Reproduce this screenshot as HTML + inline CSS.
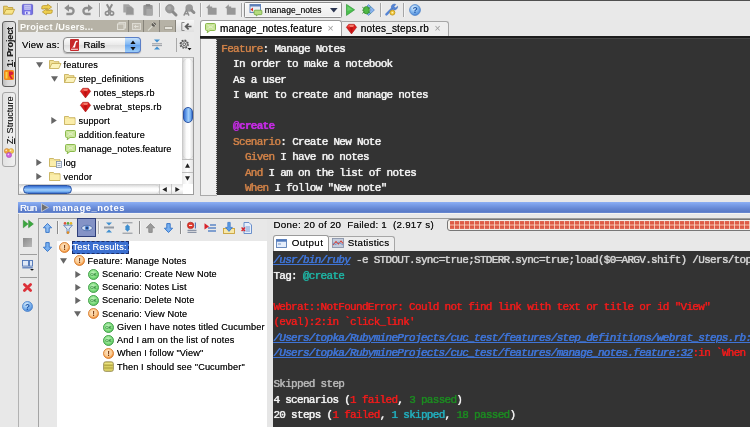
<!DOCTYPE html>
<html><head><meta charset="utf-8"><title>RubyMine - manage_notes</title>
<style>
*{box-sizing:border-box;margin:0;padding:0}
html,body{width:750px;height:427px;overflow:hidden;background:#e8e8e8}
body{position:relative;font-family:"Liberation Sans",sans-serif;font-size:10px;color:#111}
.a{position:absolute}
.t{position:absolute;white-space:nowrap;line-height:14px;height:14px;font-size:10px;letter-spacing:-0.25px;color:#111;text-shadow:0 0 0.6px rgba(0,0,0,.75)}
.m{font-family:"Liberation Mono",monospace;font-size:11px;letter-spacing:-0.7px;white-space:pre;position:absolute;line-height:15.5px;height:15.5px;color:#f2f2f2;-webkit-text-stroke:0.2px currentColor;text-shadow:0 0 0.8px currentColor}
svg{position:absolute;overflow:visible}
#app{position:absolute;left:0;top:0;width:750px;height:427px;overflow:hidden;will-change:transform}
.k{color:#cf8148}.tg{color:#c22ce0;font-weight:bold}
.lk{color:#3f74d6;text-decoration:underline;font-style:italic}
.er{color:#ee1c1c}.cy{color:#1fb3a3}.gn{color:#1d8a22}.gy{color:#b6b6b6}.g1{color:#d2d2d2}.sk{color:#22aebd}
.vt{text-shadow:0 0 0.6px rgba(0,0,0,.6);position:absolute;white-space:nowrap;transform-origin:0 0;transform:rotate(-90deg);font-size:10px;line-height:12px;height:12px}
</style></head><body>
<div id="app">
<svg width="0" height="0" style="left:0;top:0"><defs><radialGradient id="gHelp" cx="0.4" cy="0.3" r="0.75"><stop offset="0" stop-color="#e2f1fd"/><stop offset="0.45" stop-color="#8fc0f2"/><stop offset="1" stop-color="#3f7fd4"/></radialGradient><radialGradient id="gOk" cx="0.45" cy="0.4" r="0.7"><stop offset="0" stop-color="#c9f5c4"/><stop offset="0.6" stop-color="#7ddc7c"/><stop offset="1" stop-color="#3fae4a"/></radialGradient><radialGradient id="gWarn" cx="0.45" cy="0.4" r="0.7"><stop offset="0" stop-color="#fde6c8"/><stop offset="0.55" stop-color="#fbc98e"/><stop offset="0.75" stop-color="#f39a45"/><stop offset="1" stop-color="#e8792a"/></radialGradient></defs></svg>
<div class="a" id="topline" style="left:-10px;top:-10px;width:780px;height:11.2px;background:#505050"></div>
<div class="a" id="toolbar" style="left:-10px;top:1px;width:780px;height:19px;background:#e9e9e9"></div>
<div class="a" id="stripe" style="left:-10px;top:20px;width:28px;height:427px;background:#e8e8e8"></div>
<div class="a" id="btnProject" style="left:2px;top:21px;width:14px;height:66px;border:1px solid #5f5f5f;border-radius:3px;background:linear-gradient(90deg,#bdbdbd,#d9d9d9 40%,#e4e4e4)"></div>
<div class="vt" style="left:3.5px;top:66.6px;font-weight:bold;font-size:9px;letter-spacing:-0.1px;color:#222"><u>1</u>: Project</div>
<svg style="left:4px;top:70px" width="10" height="10" viewBox="0 0 10 10"><rect x="0" y="0" width="10" height="10" rx="1.5" fill="#f28a1c"/><path d="M5 1.5h2.6a1.8 1.8 0 0 1 0 3.6H6.5L9 9H7L5 5.5z" fill="#d81c3a"/><path d="M1.5 2h2v6.5h-2z" fill="#fbd24a"/></svg>
<div class="a" id="btnStructure" style="left:2px;top:92px;width:14px;height:75px;border:1px solid #a6a6a6;border-radius:3px;background:linear-gradient(90deg,#e2e2e2,#f1f1f1)"></div>
<div class="vt" style="left:3.5px;top:144.2px;font-size:9.1px;letter-spacing:0;color:#222"><u>Z</u>: Structure</div>
<svg style="left:4px;top:148px" width="10" height="10" viewBox="0 0 10 10"><circle cx="2.8" cy="3" r="2.5" fill="#f0a43c" stroke="#c87f22" stroke-width="0.5"/><circle cx="7.2" cy="3" r="2.5" fill="#f4c452" stroke="#c89a2a" stroke-width="0.5"/><circle cx="5" cy="7" r="2.6" fill="#cf62dc" stroke="#a040b0" stroke-width="0.5"/><circle cx="2.2" cy="2.4" r="0.8" fill="#fff" opacity=".7"/><circle cx="6.6" cy="2.4" r="0.8" fill="#fff" opacity=".7"/><circle cx="4.4" cy="6.4" r="0.8" fill="#fff" opacity=".7"/></svg>
<div class="a" id="projhead" style="left:18px;top:20px;width:158px;height:12px;background:#b6b2a6"></div>
<div class="t" style="left:20px;top:20px;font-size:9.2px;letter-spacing:0.22px;color:#fbfbf8;font-weight:bold;text-shadow:none">Project /Users...</div>
<div class="a" style="left:128.2px;top:20px;width:1px;height:12px;background:#86837a"></div>
<div class="a" style="left:143.0px;top:20px;width:1px;height:12px;background:#86837a"></div>
<div class="a" style="left:158.7px;top:20px;width:1px;height:12px;background:#86837a"></div>
<div class="a" style="left:174.9px;top:20px;width:1px;height:12px;background:#86837a"></div>
<svg style="left:117px;top:22px" width="9" height="8" viewBox="0 0 9 8"><rect x="2" y="0.5" width="6.5" height="5.5" fill="#c4c1b6" stroke="#dcdad2" stroke-width="1"/><rect x="0.5" y="2" width="6.5" height="5.5" fill="#bdb9ad" stroke="#e0ded6" stroke-width="1"/></svg>
<svg style="left:131.5px;top:22.5px" width="9" height="7" viewBox="0 0 9 7"><rect x="0.5" y="0.5" width="8" height="6" fill="#c4c0b5" stroke="#dcdad2" stroke-width="1"/><path d="M2.5 3.5h4M3.8 2.2L2.5 3.5l1.3 1.3" stroke="#e6e4dc" stroke-width="0.9" fill="none"/></svg>
<svg style="left:147px;top:21px" width="10" height="10" viewBox="0 0 10 10"><path d="M1 9.5L5.5 5" stroke="#dcdad2" stroke-width="1.1"/><circle cx="6.8" cy="3.6" r="2.1" fill="#5c5a55"/><path d="M5.2 1.4L9 5.2" stroke="#dcdad2" stroke-width="0.9"/></svg>
<div class="a" id="minbtn" style="left:164px;top:26px;width:9px;height:3.5px;background:#e4e2da;border:1px solid #a6a296"></div>
<div class="a" id="hidebtn" style="left:176px;top:20px;width:18px;height:12px;background:linear-gradient(#f6f6f6,#e0e0e0)"></div>
<svg style="left:180.5px;top:21.5px" width="11" height="9" viewBox="0 0 11 9"><path d="M3.5 0.5H0.8v8h2.7" stroke="#8a8a8a" stroke-width="1" fill="none"/><path d="M10.5 4.5H5.2M7.6 1.6L4.6 4.5l3 2.9" stroke="#5a5a5a" stroke-width="1.7" fill="none"/></svg>
<div class="a" id="viewrow" style="left:18px;top:32px;width:176px;height:25px;background:#e9e9e9"></div>
<div class="t" style="left:22px;top:38px;font-size:9.6px;letter-spacing:0.2px;">View as:</div>
<div class="a" id="combo" style="left:63px;top:37px;width:78px;height:15.5px;border:1px solid #8b8b8b;border-radius:4px;background:linear-gradient(#fdfdfd,#e9e9e9 50%,#dedede 52%,#f4f4f4);box-shadow:0 1px 1px rgba(0,0,0,.25)"></div>
<div class="a" id="combostep" style="left:125px;top:37px;width:16px;height:15.5px;border:1px solid #5a7fc8;border-left:none;border-radius:0 4px 4px 0;background:linear-gradient(#c6e2fc,#82b8f3 45%,#66a4ee 52%,#9ccefa)"></div>
<svg style="left:130px;top:39.5px" width="6" height="11" viewBox="0 0 6 11"><path d="M3 0.5L5.6 4H0.4z M3 10.5L5.6 7H0.4z" fill="#111"/></svg>
<svg style="left:70px;top:38.5px" width="9" height="12" viewBox="0 0 9 12"><rect x="0" y="0" width="9" height="12" rx="1" fill="#c6282b"/><path d="M2 8.5c1.5-0.5 2-3 3-5.5 0.6-1.2 1.8-1.4 2.6-1v1.2c-1-0.4-1.4 0.2-1.8 1.6L5 8.5z" fill="#fff"/><rect x="1" y="9.7" width="7" height="1.2" fill="#f6c9c9"/></svg>
<div class="t" style="left:83.5px;top:38px;font-size:9.6px;letter-spacing:0.05px;">Rails</div>
<svg style="left:152px;top:39px" width="10" height="11" viewBox="0 0 10 11"><path d="M2 0.5h6L5 3.6z" fill="#3f8fd0"/><path d="M2 10.5h6L5 7.4z" fill="#3f8fd0"/><path d="M0 4.8h10M0 6.6h10" stroke="#8d939b" stroke-width="0.9"/></svg>
<div class="a" style="left:176px;top:38px;width:1px;height:14px;background:#a8a8a8"></div>
<svg style="left:178.5px;top:39px" width="13" height="12" viewBox="0 0 13 12"><circle cx="5.2" cy="5.2" r="3.7" fill="none" stroke="#555" stroke-width="1.9" stroke-dasharray="1.6 1.3"/><circle cx="5.2" cy="5.2" r="3.2" fill="#e4e4e4" stroke="#555" stroke-width="0.9"/><circle cx="5.2" cy="5.2" r="1.4" fill="none" stroke="#555" stroke-width="0.9"/><path d="M8.5 9h4L10.5 11.2z" fill="#111"/></svg>
<div class="a" id="tree" style="left:18px;top:57px;width:176px;height:138px;background:#fff;border:1px solid #9c9c9c;border-top-color:#b4b4b4"></div>
<div class="t" style="left:63.5px;top:58px;font-size:9.2px;letter-spacing:0.17px;">features</div>
<svg style="left:49.0px;top:59.300000000000004px" width="12" height="10" viewBox="0 0 12 10"><path d="M0.5 9.5V1.5h4l1 1.2h4.5v1.8" fill="#f2e29a" stroke="#c2a84e" stroke-width="0.8"/><path d="M0.5 9.5L2.8 4.5h9.2L9.8 9.5z" fill="#fbf3bd" stroke="#c2a84e" stroke-width="0.8"/></svg>
<svg style="left:35.5px;top:61.900000000000006px" width="7" height="6" viewBox="0 0 7 6"><path d="M0 0.3h7L3.5 5.8z" fill="#666"/></svg>
<div class="t" style="left:78.5px;top:72px;font-size:9.2px;letter-spacing:0.1px;">step_definitions</div>
<svg style="left:64.0px;top:73.3px" width="12" height="10" viewBox="0 0 12 10"><path d="M0.5 9.5V1.5h4l1 1.2h4.5v1.8" fill="#f2e29a" stroke="#c2a84e" stroke-width="0.8"/><path d="M0.5 9.5L2.8 4.5h9.2L9.8 9.5z" fill="#fbf3bd" stroke="#c2a84e" stroke-width="0.8"/></svg>
<svg style="left:50.5px;top:75.9px" width="7" height="6" viewBox="0 0 7 6"><path d="M0 0.3h7L3.5 5.8z" fill="#666"/></svg>
<div class="t" style="left:93.5px;top:86px;font-size:9.2px;letter-spacing:0.06px;">notes_steps.rb</div>
<svg style="left:79.5px;top:87.7px" width="11" height="10" viewBox="0 0 11 10"><path d="M2.8 0.3h5.4L10.6 3.3 5.5 9.9 0.4 3.3z" fill="#dc1a1a" stroke="#9a1010" stroke-width="0.6"/><path d="M2.9 0.7h5.2L7.2 3.3H3.8z" fill="#f47a6a"/><path d="M3.8 3.3h3.4L5.5 9.2z" fill="#b81212"/><path d="M1 3.2L2.9 0.8 3.8 3.3z" fill="#ee4a40"/></svg>
<div class="t" style="left:93.5px;top:100px;font-size:9.2px;letter-spacing:0.2px;">webrat_steps.rb</div>
<svg style="left:79.5px;top:101.7px" width="11" height="10" viewBox="0 0 11 10"><path d="M2.8 0.3h5.4L10.6 3.3 5.5 9.9 0.4 3.3z" fill="#dc1a1a" stroke="#9a1010" stroke-width="0.6"/><path d="M2.9 0.7h5.2L7.2 3.3H3.8z" fill="#f47a6a"/><path d="M3.8 3.3h3.4L5.5 9.2z" fill="#b81212"/><path d="M1 3.2L2.9 0.8 3.8 3.3z" fill="#ee4a40"/></svg>
<div class="t" style="left:78.5px;top:114px;font-size:9.2px;letter-spacing:0.1px;">support</div>
<svg style="left:64.0px;top:115.3px" width="12" height="10" viewBox="0 0 12 10"><path d="M0.5 9.5V1.5h4l1 1.2h5.5v6.8z" fill="#f6e79c" stroke="#c2a84e" stroke-width="0.8"/><path d="M1 4h9.6v5H1z" fill="#fbeeab"/></svg>
<svg style="left:51.0px;top:117.2px" width="6" height="7" viewBox="0 0 6 7"><path d="M0.3 0v7L5.8 3.5z" fill="#666"/></svg>
<div class="t" style="left:78.5px;top:128px;font-size:9.2px;letter-spacing:0.2px;">addition.feature</div>
<svg style="left:64.5px;top:129.7px" width="11" height="10" viewBox="0 0 11 10"><path d="M1.6 0.5h7.8a1.1 1.1 0 0 1 1.1 1.1v4.8a1.1 1.1 0 0 1-1.1 1.1H5L2.2 9.8 2.6 7.5H1.6a1.1 1.1 0 0 1-1.1-1.1V1.6a1.1 1.1 0 0 1 1.1-1.1z" fill="#c9e49a" stroke="#8bba4e" stroke-width="1"/><path d="M2.6 2.2l5.8 3.4M8.4 2.2L2.6 5.6" stroke="#e2f2c6" stroke-width="0.9"/></svg>
<div class="t" style="left:78.5px;top:142px;font-size:9.2px;letter-spacing:0.05px;">manage_notes.feature</div>
<svg style="left:64.5px;top:143.7px" width="11" height="10" viewBox="0 0 11 10"><path d="M1.6 0.5h7.8a1.1 1.1 0 0 1 1.1 1.1v4.8a1.1 1.1 0 0 1-1.1 1.1H5L2.2 9.8 2.6 7.5H1.6a1.1 1.1 0 0 1-1.1-1.1V1.6a1.1 1.1 0 0 1 1.1-1.1z" fill="#c9e49a" stroke="#8bba4e" stroke-width="1"/><path d="M2.6 2.2l5.8 3.4M8.4 2.2L2.6 5.6" stroke="#e2f2c6" stroke-width="0.9"/></svg>
<div class="t" style="left:63.5px;top:156px;font-size:9.2px;letter-spacing:0.1px;">log</div>
<svg style="left:49.0px;top:157.29999999999998px" width="12" height="10" viewBox="0 0 12 10"><path d="M0.5 9.5V1.5h4l1 1.2h5.5v6.8z" fill="#f6e79c" stroke="#c2a84e" stroke-width="0.8"/><path d="M1 4h9.6v5H1z" fill="#fbeeab"/></svg>
<svg style="left:55.5px;top:160.7px" width="6" height="7" viewBox="0 0 6 7"><rect x="0.5" y="0.5" width="5" height="6" fill="#eef3fa" stroke="#7e8fa8" stroke-width="0.8"/><path d="M1.5 2.5h3M1.5 4.5h3" stroke="#7e8fa8" stroke-width="0.7"/></svg>
<svg style="left:36.0px;top:159.2px" width="6" height="7" viewBox="0 0 6 7"><path d="M0.3 0v7L5.8 3.5z" fill="#666"/></svg>
<div class="t" style="left:63.5px;top:170px;font-size:9.2px;letter-spacing:0.1px;">vendor</div>
<svg style="left:49.0px;top:171.29999999999998px" width="12" height="10" viewBox="0 0 12 10"><path d="M0.5 9.5V1.5h4l1 1.2h5.5v6.8z" fill="#f6e79c" stroke="#c2a84e" stroke-width="0.8"/><path d="M1 4h9.6v5H1z" fill="#fbeeab"/></svg>
<svg style="left:36.0px;top:173.2px" width="6" height="7" viewBox="0 0 6 7"><path d="M0.3 0v7L5.8 3.5z" fill="#666"/></svg>
<div class="a" id="vsb" style="left:182px;top:58px;width:11px;height:126px;background:linear-gradient(90deg,#c9c9c9,#f2f2f2 30%,#fff 60%,#e3e3e3)"></div>
<div class="a" id="vthumbtrack" style="left:183px;top:59px;width:10px;height:100px;border-radius:5px;background:linear-gradient(90deg,#d5d5d5,#fbfbfb 35%,#fff 65%,#dcdcdc);box-shadow:0 0 1px #999"></div>
<div class="a" id="vthumb" style="left:183px;top:107px;width:10px;height:16px;border-radius:5px;background:linear-gradient(90deg,#3a6ccc,#5f9aea 25%,#a2cefa 55%,#74b0f2 80%,#3b70cc);border:1px solid #2c54a4"></div>
<div class="a" style="left:182px;top:159px;width:11px;height:12.5px;background:linear-gradient(90deg,#e9e9e9,#fff 50%,#e5e5e5);border-top:1px solid #bdbdbd"></div>
<div class="a" style="left:182px;top:171.5px;width:11px;height:12.5px;background:linear-gradient(90deg,#e9e9e9,#fff 50%,#e5e5e5);border-top:1px solid #bdbdbd"></div>
<svg style="left:185px;top:162.5px" width="5" height="5" viewBox="0 0 5 5"><path d="M2.5 0.3L5 4.8H0z" fill="#222"/></svg>
<svg style="left:185px;top:175.5px" width="5" height="5" viewBox="0 0 5 5"><path d="M2.5 4.8L5 0.3H0z" fill="#222"/></svg>
<div class="a" id="hsb" style="left:19px;top:184px;width:174px;height:10.3px;background:linear-gradient(#cfcfcf,#f4f4f4 30%,#fff 60%,#e2e2e2)"></div>
<div class="a" style="left:20px;top:184.5px;width:139px;height:9.5px;border-radius:5px;background:linear-gradient(#d9d9d9,#fbfbfb 35%,#fff 65%,#dedede);box-shadow:0 0 1px #999"></div>
<div class="a" id="hthumb" style="left:23px;top:185px;width:49px;height:9px;border-radius:5px;background:linear-gradient(#3a6ccc,#5f9aea 25%,#a2cefa 55%,#74b0f2 80%,#3b70cc);border:1px solid #2c54a4"></div>
<div class="a" style="left:159px;top:184px;width:12px;height:10.3px;background:linear-gradient(#e4e4e4,#fff 50%,#e2e2e2);border-left:1px solid #c4c4c4"></div>
<div class="a" style="left:171px;top:184px;width:12px;height:10.3px;background:linear-gradient(#e4e4e4,#fff 50%,#e2e2e2);border-left:1px solid #c4c4c4"></div>
<svg style="left:162px;top:187px" width="5" height="5" viewBox="0 0 5 5"><path d="M0.3 2.5L4.8 0v5z" fill="#222"/></svg>
<svg style="left:174.5px;top:187px" width="5" height="5" viewBox="0 0 5 5"><path d="M4.8 2.5L0.3 0v5z" fill="#222"/></svg>
<div class="a" style="left:183px;top:184px;width:10px;height:10.3px;background:#fff"></div>
<div class="a" id="edtabs" style="left:200px;top:20px;width:570px;height:17px;background:#e8e8e8"></div>
<div class="a" id="editor" style="left:200px;top:36px;width:570px;height:159px;background:#333"></div>
<div class="a" style="left:200px;top:35.8px;width:570px;height:2px;background:#1c1c1c"></div>
<div class="a" style="left:200px;top:37.8px;width:570px;height:0.8px;background:#464646"></div>
<div class="a" id="gutter" style="left:200px;top:38.5px;width:17px;height:157px;background:#efefef;border-left:1px solid #a8a8a8;border-bottom:1px solid #aaa"></div>
<div class="a" style="left:216.2px;top:39px;width:1px;height:156px;background:repeating-linear-gradient(#555 0 1px,#ddd 1px 2px)"></div>
<div class="a" id="runhead" style="left:18px;top:201.6px;width:752px;height:11.5px;background:linear-gradient(#8db0f4,#7a9ee8 25%,#6688d4 60%,#5879c6 90%,#6f8fd6)"></div>
<div class="a" id="runtree" style="left:57px;top:240.7px;width:210.4px;height:206.3px;background:#fff"></div>
<div class="a" id="console" style="left:273px;top:251px;width:497px;height:196px;background:#333"></div>
<svg style="left:3px;top:4.5px" width="12" height="10" viewBox="0 0 12 10"><path d="M0.6 9V1.2h3.6l1 1.3h4.6v2" fill="#ecd06a" stroke="#bb9a34" stroke-width="0.8"/><path d="M0.6 9.2L3 4.4h8.6L9.4 9.2z" fill="#f8e488" stroke="#bb9a34" stroke-width="0.8"/></svg>
<svg style="left:22px;top:4px" width="11" height="11" viewBox="0 0 11 11"><rect x="0.4" y="0.4" width="10.2" height="10.2" rx="1" fill="#7672e6" stroke="#5a56c8" stroke-width="0.8"/><rect x="2.2" y="0.8" width="6.6" height="5" fill="#cacaf4"/><path d="M2.6 2.4h5.8M2.6 4.2h5.8" stroke="#a09ee8" stroke-width="0.8"/><rect x="2.8" y="7.4" width="5.4" height="3.2" fill="#e0e0fa"/><rect x="4" y="8" width="1.6" height="2" fill="#6a66dc"/></svg>
<svg style="left:40.5px;top:4px" width="12" height="11" viewBox="0 0 12 11"><path d="M0.8 5V3.2a1.6 1.6 0 0 1 1.6-1.6h4.2V0.2l4 2.9-4 2.9V4.4H3.4V5z" fill="#f0d050" stroke="#b8962a" stroke-width="0.8"/><path d="M11.2 6v1.8a1.6 1.6 0 0 1-1.6 1.6H5.4v1.4l-4-2.9 4-2.9v1.6h3.2V6z" fill="#f0d050" stroke="#b8962a" stroke-width="0.8"/></svg>
<div class="a" style="left:57px;top:3px;width:1px;height:14px;background:#a6a6a6;box-shadow:1px 0 0 rgba(255,255,255,.5)"></div>
<svg style="left:64px;top:4px" width="11" height="11" viewBox="0 0 11 11"><path d="M3.4 4h3.2a3 3 0 0 1 0 6H2.4" fill="none" stroke="#8e8e8e" stroke-width="2.3"/><path d="M5 0.2L0.2 4 5 7.8z" fill="#8e8e8e"/></svg>
<svg style="left:82px;top:4px" width="11" height="11" viewBox="0 0 11 11"><g transform="translate(11,0) scale(-1,1)"><path d="M3.4 4h3.2a3 3 0 0 1 0 6H2.4" fill="none" stroke="#8e8e8e" stroke-width="2.3"/><path d="M5 0.2L0.2 4 5 7.8z" fill="#8e8e8e"/></g></svg>
<div class="a" style="left:99px;top:3px;width:1px;height:14px;background:#a6a6a6;box-shadow:1px 0 0 rgba(255,255,255,.5)"></div>
<svg style="left:105px;top:3.5px" width="9" height="12" viewBox="0 0 9 12"><path d="M1.8 0.3L5.8 7.6M7.2 0.3L3.2 7.6" stroke="#8e8e8e" stroke-width="2" fill="none"/><circle cx="2.2" cy="9.3" r="1.8" fill="none" stroke="#8e8e8e" stroke-width="1.6"/><circle cx="6.8" cy="9.3" r="1.8" fill="none" stroke="#8e8e8e" stroke-width="1.6"/></svg>
<svg style="left:123px;top:4px" width="11" height="11" viewBox="0 0 11 11"><path d="M0.3 0.3h5.4l2 2v6.2h-7.4z" fill="#a4a4a4"/><path d="M3 2.4h5.2l2.4 2.4v6H3z" fill="#969696" stroke="#adadad" stroke-width="0.5"/></svg>
<svg style="left:142.5px;top:3.5px" width="10" height="12" viewBox="0 0 10 12"><rect x="0.3" y="1" width="9.4" height="10.6" rx="1" fill="#989898"/><rect x="2.8" y="0.1" width="4.4" height="2.4" fill="#858585"/><rect x="3.4" y="4.8" width="6.2" height="6.8" fill="#a9a9a9"/></svg>
<div class="a" style="left:159px;top:3px;width:1px;height:14px;background:#a6a6a6;box-shadow:1px 0 0 rgba(255,255,255,.5)"></div>
<svg style="left:164.5px;top:3.5px" width="12" height="12" viewBox="0 0 12 12"><circle cx="4.8" cy="4.8" r="4.2" fill="#9a9a9a" stroke="#8c8c8c" stroke-width="0.8"/><circle cx="4.2" cy="4" r="2" fill="#a8a8a8"/><path d="M8 8l3 3" stroke="#8a8a8a" stroke-width="3" stroke-linecap="round"/></svg>
<svg style="left:182.5px;top:3.5px" width="12" height="12" viewBox="0 0 12 12"><circle cx="6.2" cy="4" r="3.8" fill="#9a9a9a"/><path d="M8.6 6.4l2.4 2.2" stroke="#8c8c8c" stroke-width="2.8" stroke-linecap="round"/><path d="M0.8 11.6L3.4 6l2.6 5.6M1.8 9.8h3.2" stroke="#8f8f8f" stroke-width="1.4" fill="none"/></svg>
<div class="a" style="left:200px;top:3px;width:1px;height:14px;background:#a6a6a6;box-shadow:1px 0 0 rgba(255,255,255,.5)"></div>
<svg style="left:206px;top:4px" width="11" height="11" viewBox="0 0 11 11"><path d="M0.2 3.8L3.8 0.2v2.2h2.4v1.4h4.4v7H1.8V4.6z" fill="#979797"/></svg>
<svg style="left:224.5px;top:4px" width="11" height="11" viewBox="0 0 11 11"><path d="M0.2 3.8L3.8 0.2v2.2h2.4v1.4h4.4v7H1.8V4.6z" fill="#979797"/></svg>
<div class="a" style="left:241px;top:3px;width:1px;height:14px;background:#a6a6a6;box-shadow:1px 0 0 rgba(255,255,255,.5)"></div>
<div class="a" id="runcombo" style="left:244px;top:2px;width:97.5px;height:15.5px;border:1px solid #8d8d8d;border-radius:1.5px;background:linear-gradient(#fafafa,#ededed);box-shadow:inset 0 0 0 0.5px #fff"></div>
<svg style="left:249px;top:4px" width="13" height="12" viewBox="0 0 13 12"><rect x="1" y="0.5" width="10.5" height="8" fill="#e9eef7" stroke="#5c7fb8" stroke-width="0.9"/><rect x="1" y="0.5" width="10.5" height="2" fill="#5c7fb8"/><path d="M4 3.6L1.4 5.6 4 7.6z" fill="#d93025"/><path d="M6 6.2h6a0.9 0.9 0 0 1 .9 .9v2.6a0.9 0.9 0 0 1-.9 .9H9l-1.8 1.4 .3-1.4H6a0.9 0.9 0 0 1-.9-.9V7.1a0.9 0.9 0 0 1 .9-.9z" fill="#b5dc7f" stroke="#6ea53a" stroke-width="0.8"/></svg>
<div class="t" style="left:264.7px;top:3px;font-size:8.5px;letter-spacing:0.05px;color:#222">manage_notes</div>
<svg style="left:330px;top:8px" width="8" height="5" viewBox="0 0 8 5"><path d="M0 0h7.6L3.8 4.4z" fill="#2b3550"/></svg>
<svg style="left:346px;top:4px" width="9" height="12" viewBox="0 0 9 12"><path d="M0.5 0.4L8.6 5.8 0.5 11.4z" fill="#4bbf4e" stroke="#2f9a36" stroke-width="0.7"/><path d="M1.4 2.2L6.4 5.6 1.4 7z" fill="#7fdc80" opacity=".6"/></svg>
<svg style="left:362px;top:3.5px" width="13" height="12" viewBox="0 0 13 12"><path d="M6.6 0.6L12.4 6 6.6 11.4 5 10 9.2 6 5 2z" fill="#8cb8ee" stroke="#4679c4" stroke-width="0.7"/><ellipse cx="4.4" cy="6.2" rx="3" ry="3.7" fill="#4fb845" stroke="#2f8a2a" stroke-width="0.7"/><path d="M0.3 3.2l2 1.4M0.1 6.2h1.6M0.3 9.4l2-1.4M8.6 3.2l-2 1.4M8.6 9.4l-2-1.4" stroke="#2f8a2a" stroke-width="0.8"/></svg>
<div class="a" style="left:380px;top:3px;width:1px;height:14px;background:#a6a6a6;box-shadow:1px 0 0 rgba(255,255,255,.5)"></div>
<svg style="left:385px;top:3.5px" width="13" height="12" viewBox="0 0 13 12"><path d="M1.4 10.4L7.6 4.2" stroke="#5585d6" stroke-width="2.4" stroke-linecap="round"/><path d="M6.2 3.2a3.2 3.2 0 0 1 4.6-2.8L9 2.4l1.6 1.6 2-1.8a3.2 3.2 0 0 1-4 3.6z" fill="#5585d6" stroke="#3c68b4" stroke-width="0.5"/><circle cx="7.4" cy="8.6" r="2.5" fill="#f3c83a" stroke="#b8901c" stroke-width="0.8"/><circle cx="7.4" cy="8.6" r="0.9" fill="#fdf2c0"/></svg>
<div class="a" style="left:403px;top:3px;width:1px;height:14px;background:#a6a6a6;box-shadow:1px 0 0 rgba(255,255,255,.5)"></div>
<svg style="left:408.5px;top:3.5px" width="12" height="12" viewBox="0 0 12 12"><circle cx="6" cy="6" r="5.4" fill="url(#gHelp)" stroke="#4a80c8" stroke-width="0.8"/><text x="6" y="9.1" text-anchor="middle" font-family="Liberation Sans, sans-serif" font-size="8.6" font-weight="bold" fill="#1f56a8">?</text></svg>
<div class="a" id="tab1" style="left:200px;top:20px;width:141.5px;height:15.9px;background:#fff;border:1px solid #9a9a9a;border-bottom:none;border-radius:3px 3px 0 0"></div>
<svg style="left:204.5px;top:23px" width="11" height="10" viewBox="0 0 11 10"><path d="M1.6 0.5h7.8a1.1 1.1 0 0 1 1.1 1.1v4.8a1.1 1.1 0 0 1-1.1 1.1H5L2.2 9.8 2.6 7.5H1.6a1.1 1.1 0 0 1-1.1-1.1V1.6a1.1 1.1 0 0 1 1.1-1.1z" fill="#c9e49a" stroke="#8bba4e" stroke-width="1"/><path d="M2.6 2.2l5.8 3.4M8.4 2.2L2.6 5.6" stroke="#e2f2c6" stroke-width="0.9"/></svg>
<div class="t" style="left:220px;top:22px;font-size:10px;letter-spacing:0.1px;">manage_notes.feature</div>
<div class="t" style="left:327.5px;top:21px;font-size:10.5px;letter-spacing:0px;color:#9c9c9c;text-shadow:none">×</div>
<div class="a" id="tab2" style="left:341.5px;top:21px;width:107px;height:15px;background:#eeeeee;border:1px solid #a6a6a6;border-bottom:none;border-left:none;border-radius:0 3px 0 0"></div>
<svg style="left:345.5px;top:23.5px" width="11" height="10" viewBox="0 0 11 10"><path d="M2.8 0.3h5.4L10.6 3.3 5.5 9.9 0.4 3.3z" fill="#dc1a1a" stroke="#9a1010" stroke-width="0.6"/><path d="M2.9 0.7h5.2L7.2 3.3H3.8z" fill="#f47a6a"/><path d="M3.8 3.3h3.4L5.5 9.2z" fill="#b81212"/><path d="M1 3.2L2.9 0.8 3.8 3.3z" fill="#ee4a40"/></svg>
<div class="t" style="left:360.7px;top:22px;font-size:10px;letter-spacing:0.2px;">notes_steps.rb</div>
<div class="t" style="left:434.5px;top:21px;font-size:10.5px;letter-spacing:0px;color:#9c9c9c;text-shadow:none">×</div>
<div class="t" style="left:20px;top:201px;font-size:9.8px;letter-spacing:-0.35px;color:#fff;text-shadow:0 0 0.5px rgba(255,255,255,.8)">Run</div>
<svg style="left:40.5px;top:203.3px" width="8" height="9" viewBox="0 0 8 9"><path d="M0.5 0.4L7.6 4.5 0.5 8.6z" fill="#707070" stroke="#c4c8d2" stroke-width="0.9"/></svg>
<div class="t" style="left:52.7px;top:201px;font-size:9.4px;letter-spacing:0.55px;color:#fff;font-weight:bold;text-shadow:none">manage_notes</div>
<div class="a" style="left:17.8px;top:213.5px;width:1.4px;height:233.5px;background:#b2b2b2"></div>
<div class="a" style="left:19.2px;top:213.2px;width:752px;height:1.2px;background:#f3f3f3"></div>
<div class="a" style="left:37.6px;top:218px;width:1.4px;height:229px;background:#a4a4a4"></div>
<div class="a" style="left:38px;top:217.6px;width:732px;height:1px;background:#9c9c9c"></div>
<svg style="left:22.5px;top:219.5px" width="11" height="8" viewBox="0 0 11 8"><path d="M0.3 0.2L5 4 0.3 7.8z M5.6 0.2L10.4 4 5.6 7.8z" fill="#3aa83e" stroke="#2a842e" stroke-width="0.5"/></svg>
<div class="a" style="left:23px;top:238px;width:9px;height:9px;background:linear-gradient(135deg,#8a8a8a,#b9b9b9)"></div>
<div class="a" style="left:20px;top:254px;width:17px;height:1px;background:#9d9d9d"></div>
<svg style="left:22px;top:260px" width="12" height="11" viewBox="0 0 12 11"><rect x="0.5" y="0.5" width="6" height="5.6" fill="#dfe8f6" stroke="#4d73b5" stroke-width="0.9"/><rect x="7.5" y="0.5" width="3" height="5.6" fill="#dfe8f6" stroke="#4d73b5" stroke-width="0.9"/><path d="M0.3 7.8h10.4" stroke="#4d73b5" stroke-width="1.2"/><path d="M8 9h4L10 10.8z" fill="#111"/></svg>
<div class="a" style="left:20px;top:277px;width:17px;height:1px;background:#9d9d9d"></div>
<svg style="left:23px;top:282.5px" width="9" height="9" viewBox="0 0 9 9"><path d="M1.4 1.4L7.6 7.6M7.6 1.4L1.4 7.6" stroke="#dc3038" stroke-width="2.8" stroke-linecap="round"/></svg>
<svg style="left:22px;top:301px" width="11" height="11" viewBox="0 0 11 11"><circle cx="5.5" cy="5.5" r="5" fill="url(#gHelp)" stroke="#4a80c8" stroke-width="0.8"/><text x="5.5" y="8.5" text-anchor="middle" font-family="Liberation Sans, sans-serif" font-size="8.2" font-weight="bold" fill="#1f56a8">?</text></svg>
<svg style="left:42.5px;top:222.5px" width="9" height="10" viewBox="0 0 9 10"><path d="M4.5 0.5L8.6 4.8H6.2V9.4H2.8V4.8H0.4z" fill="#8dbcf2" stroke="#2f6fc6" stroke-width="0.9"/></svg>
<div class="a" style="left:57px;top:221px;width:1px;height:13px;background:#8a8a8a;box-shadow:1px 0 0 rgba(255,255,255,.5)"></div>
<svg style="left:62.5px;top:221.5px" width="10" height="12" viewBox="0 0 10 12"><circle cx="2" cy="1.4" r="1.3" fill="#e0533a"/><circle cx="5" cy="1.4" r="1.3" fill="#5aa83a"/><circle cx="8" cy="1.4" r="1.3" fill="#e6b422"/><path d="M0.6 3.2h8.8L6 7v3.6L4 11.6V7z" fill="#dfe6f2" stroke="#4f78b8" stroke-width="0.8"/><circle cx="5" cy="10.6" r="1.3" fill="#e28a1c"/></svg>
<div class="a" id="eyebtn" style="left:77px;top:218px;width:18.5px;height:19px;background:#8493c6;border:1px solid #2f3f7a"></div>
<svg style="left:80.5px;top:223.5px" width="12" height="8" viewBox="0 0 12 8"><path d="M0.3 4C2.6 0.4 9.4 0.4 11.7 4 9.4 7.6 2.6 7.6 0.3 4z" fill="#dbe6f6" stroke="#41619f" stroke-width="0.8"/><circle cx="6" cy="4" r="2.3" fill="#4f83d0"/><circle cx="6" cy="4" r="1" fill="#1d2f5c"/></svg>
<div class="a" style="left:98px;top:221px;width:1px;height:13px;background:#b0b0b0;box-shadow:1px 0 0 rgba(255,255,255,.5)"></div>
<svg style="left:104px;top:222px" width="10" height="11" viewBox="0 0 10 11"><path d="M2 0.5h6L5 3.6z" fill="#3f8fd0"/><path d="M2 10.5h6L5 7.4z" fill="#3f8fd0"/><path d="M0 5.5h10" stroke="#9299a2" stroke-width="2"/></svg>
<svg style="left:122px;top:221.5px" width="11" height="12" viewBox="0 0 11 12"><path d="M0.5 0.8h10M0.5 11.2h10" stroke="#8a8f96" stroke-width="1"/><path d="M5.5 2.2L8 5H3z M5.5 9.8L8 7H3z" fill="#3f8fd0"/><rect x="3.4" y="4.6" width="4.2" height="2.8" fill="#3f8fd0"/></svg>
<div class="a" style="left:139px;top:221px;width:1px;height:13px;background:#8a8a8a;box-shadow:1px 0 0 rgba(255,255,255,.5)"></div>
<svg style="left:145.5px;top:222.5px" width="9" height="10" viewBox="0 0 9 10"><path d="M4.5 0.5L8.6 4.8H6.2V9.4H2.8V4.8H0.4z" fill="#9a9a9a" stroke="#8a8a8a" stroke-width="0.9"/></svg>
<svg style="left:164px;top:222.5px" width="9" height="10" viewBox="0 0 9 10"><path d="M4.5 9.5L8.6 5.2H6.2V0.6H2.8V5.2H0.4z" fill="#78b0f0" stroke="#2f6fc6" stroke-width="0.9"/></svg>
<div class="a" style="left:180px;top:221px;width:1px;height:13px;background:#8a8a8a;box-shadow:1px 0 0 rgba(255,255,255,.5)"></div>
<svg style="left:186.5px;top:221.5px" width="10" height="12" viewBox="0 0 10 12"><circle cx="3.6" cy="3.4" r="3.2" fill="#e0382c" stroke="#a81f18" stroke-width="0.6"/><path d="M2 3.4h3.2" stroke="#fff" stroke-width="1"/><path d="M8.4 0.6v6" stroke="#4d73b5" stroke-width="1.1"/><path d="M0.5 8.4h9M0.5 10.4h9" stroke="#8a94a6" stroke-width="1.2"/></svg>
<svg style="left:204px;top:222.5px" width="12" height="10" viewBox="0 0 12 10"><path d="M0.5 0.3L5 3.4 0.5 6.6z" fill="#d8232a"/><path d="M6 2h6M4 5h8M4 8h8" stroke="#5c86c6" stroke-width="1.3"/></svg>
<svg style="left:222.5px;top:221.5px" width="12" height="12" viewBox="0 0 12 12"><rect x="0.5" y="6.5" width="11" height="5" fill="#f6e7a8" stroke="#c9a23a" stroke-width="0.9"/><path d="M6 9.4L2.6 5.4H4.8V0.4H7.2V5.4H9.4z" fill="#5b9de6" stroke="#2f6fc6" stroke-width="0.7"/></svg>
<svg style="left:241px;top:221.5px" width="11" height="12" viewBox="0 0 11 12"><path d="M3 0.5h5l2.5 2.5v8.5H3z" fill="#e6eefb" stroke="#5c86c6" stroke-width="0.9"/><path d="M4.5 5h4.5M4.5 7h4.5M4.5 9h4.5" stroke="#5c86c6" stroke-width="0.8"/><path d="M0.6 5.6l3.4 3.4M4 5.6L0.6 9" stroke="#d8232a" stroke-width="1.4"/></svg>
<svg style="left:42.5px;top:241.5px" width="9" height="10" viewBox="0 0 9 10"><path d="M4.5 9.5L8.6 5.2H6.2V0.6H2.8V5.2H0.4z" fill="#78b0f0" stroke="#2f6fc6" stroke-width="0.9"/></svg>
<div class="a" id="sel" style="left:72px;top:241.3px;width:57px;height:13px;background:#3b6fd0;border:1px dashed #1d2f6a"></div>
<div class="t" style="left:72.5px;top:240px;font-size:9.2px;letter-spacing:0.12px;color:#fff;text-shadow:0 0 0.6px rgba(255,255,255,.7)">Test Results:</div>
<svg style="left:58.5px;top:242.1px" width="11" height="11" viewBox="0 0 11 11"><circle cx="5.5" cy="5.5" r="5" fill="url(#gWarn)" stroke="#d0711f" stroke-width="0.8"/><text x="5.5" y="8.4" text-anchor="middle" font-family="Liberation Sans, sans-serif" font-size="8" font-weight="bold" fill="#7a3a10">!</text></svg>
<div class="t" style="left:87.5px;top:254px;font-size:9.2px;letter-spacing:0.12px;">Feature: Manage Notes</div>
<svg style="left:73.5px;top:255.35000000000002px" width="11" height="11" viewBox="0 0 11 11"><circle cx="5.5" cy="5.5" r="5" fill="url(#gWarn)" stroke="#d0711f" stroke-width="0.8"/><text x="5.5" y="8.4" text-anchor="middle" font-family="Liberation Sans, sans-serif" font-size="8" font-weight="bold" fill="#7a3a10">!</text></svg>
<svg style="left:59.5px;top:258.2px" width="7" height="6" viewBox="0 0 7 6"><path d="M0 0.3h7L3.5 5.8z" fill="#666"/></svg>
<div class="t" style="left:102px;top:267px;font-size:9.2px;letter-spacing:0.12px;">Scenario: Create New Note</div>
<svg style="left:88px;top:268.6px" width="11" height="11" viewBox="0 0 11 11"><circle cx="5.5" cy="5.5" r="5" fill="url(#gOk)" stroke="#3a9a42" stroke-width="0.9"/><text x="5.5" y="7.1" text-anchor="middle" font-family="Liberation Sans, sans-serif" font-size="4.4" font-weight="bold" fill="#2f8a3a">OK</text></svg>
<svg style="left:74.5px;top:270.7px" width="6" height="7" viewBox="0 0 6 7"><path d="M0.3 0v7L5.8 3.5z" fill="#666"/></svg>
<div class="t" style="left:102px;top:280px;font-size:9.2px;letter-spacing:0.12px;">Scenario: Notes List</div>
<svg style="left:88px;top:281.85px" width="11" height="11" viewBox="0 0 11 11"><circle cx="5.5" cy="5.5" r="5" fill="url(#gOk)" stroke="#3a9a42" stroke-width="0.9"/><text x="5.5" y="7.1" text-anchor="middle" font-family="Liberation Sans, sans-serif" font-size="4.4" font-weight="bold" fill="#2f8a3a">OK</text></svg>
<svg style="left:74.5px;top:284.0px" width="6" height="7" viewBox="0 0 6 7"><path d="M0.3 0v7L5.8 3.5z" fill="#666"/></svg>
<div class="t" style="left:102px;top:293px;font-size:9.2px;letter-spacing:0.12px;">Scenario: Delete Note</div>
<svg style="left:88px;top:295.1px" width="11" height="11" viewBox="0 0 11 11"><circle cx="5.5" cy="5.5" r="5" fill="url(#gOk)" stroke="#3a9a42" stroke-width="0.9"/><text x="5.5" y="7.1" text-anchor="middle" font-family="Liberation Sans, sans-serif" font-size="4.4" font-weight="bold" fill="#2f8a3a">OK</text></svg>
<svg style="left:74.5px;top:297.2px" width="6" height="7" viewBox="0 0 6 7"><path d="M0.3 0v7L5.8 3.5z" fill="#666"/></svg>
<div class="t" style="left:102px;top:307px;font-size:9.2px;letter-spacing:0.12px;">Scenario: View Note</div>
<svg style="left:88px;top:308.35px" width="11" height="11" viewBox="0 0 11 11"><circle cx="5.5" cy="5.5" r="5" fill="url(#gWarn)" stroke="#d0711f" stroke-width="0.8"/><text x="5.5" y="8.4" text-anchor="middle" font-family="Liberation Sans, sans-serif" font-size="8" font-weight="bold" fill="#7a3a10">!</text></svg>
<svg style="left:74px;top:311.2px" width="7" height="6" viewBox="0 0 7 6"><path d="M0 0.3h7L3.5 5.8z" fill="#666"/></svg>
<div class="t" style="left:117px;top:320px;font-size:9.2px;letter-spacing:0.12px;">Given I have notes titled Cucumber</div>
<svg style="left:103px;top:321.6px" width="11" height="11" viewBox="0 0 11 11"><circle cx="5.5" cy="5.5" r="5" fill="url(#gOk)" stroke="#3a9a42" stroke-width="0.9"/><text x="5.5" y="7.1" text-anchor="middle" font-family="Liberation Sans, sans-serif" font-size="4.4" font-weight="bold" fill="#2f8a3a">OK</text></svg>
<div class="t" style="left:117px;top:333px;font-size:9.2px;letter-spacing:0.12px;">And I am on the list of notes</div>
<svg style="left:103px;top:334.85px" width="11" height="11" viewBox="0 0 11 11"><circle cx="5.5" cy="5.5" r="5" fill="url(#gOk)" stroke="#3a9a42" stroke-width="0.9"/><text x="5.5" y="7.1" text-anchor="middle" font-family="Liberation Sans, sans-serif" font-size="4.4" font-weight="bold" fill="#2f8a3a">OK</text></svg>
<div class="t" style="left:117px;top:346px;font-size:9.2px;letter-spacing:0.12px;">When I follow "View"</div>
<svg style="left:103px;top:348.1px" width="11" height="11" viewBox="0 0 11 11"><circle cx="5.5" cy="5.5" r="5" fill="url(#gWarn)" stroke="#d0711f" stroke-width="0.8"/><text x="5.5" y="8.4" text-anchor="middle" font-family="Liberation Sans, sans-serif" font-size="8" font-weight="bold" fill="#7a3a10">!</text></svg>
<div class="t" style="left:117px;top:360px;font-size:9.2px;letter-spacing:0.12px;">Then I should see "Cucumber"</div>
<svg style="left:103px;top:361.35px" width="11" height="11" viewBox="0 0 11 11"><rect x="0.6" y="0.8" width="9.8" height="9.6" rx="2" fill="#d9cf62" stroke="#9a9060" stroke-width="0.9"/><path d="M1.2 4.2h8.6M1.2 7h8.6" stroke="#a89c3c" stroke-width="1"/><path d="M1.6 2.6h7.8" stroke="#f0e890" stroke-width="0.8"/></svg>
<div class="a" style="left:267.4px;top:219px;width:5.6px;height:228px;background:#e6e6e6"></div>
<div class="t" style="left:273.5px;top:218px;font-size:9.8px;letter-spacing:0.25px;">Done: 20 of 20&nbsp; Failed: 1&nbsp; (2.917 s)</div>
<div class="a" id="progress" style="left:447px;top:218.5px;width:330px;height:12px;background:#f4efe9;border:1px solid #777;border-radius:3px"></div>
<div class="a" id="progfill" style="left:450px;top:220.7px;width:320px;height:8px;background:repeating-linear-gradient(90deg,#dc5640 0 4px,#f1bfae 4px 5px)"></div>
<div class="a" style="left:450px;top:220.7px;width:320px;height:8px;background:linear-gradient(rgba(255,255,255,.12),rgba(255,255,255,.0) 30%,rgba(255,220,200,.45) 45%,rgba(255,220,200,.45) 55%,rgba(255,255,255,0) 70%,rgba(255,255,255,.15))"></div>
<div class="a" id="otab1" style="left:273px;top:235px;width:55.5px;height:16px;background:#fff;border:1px solid #9a9a9a;border-bottom:none;border-radius:3px 3px 0 0"></div>
<svg style="left:276px;top:238.6px" width="11" height="9" viewBox="0 0 11 9"><rect x="0.5" y="0.5" width="10" height="8" fill="#e6eefb" stroke="#5c7fb8" stroke-width="0.9"/><rect x="0.5" y="0.5" width="10" height="2.2" fill="#4e78bd"/><path d="M2 5h3" stroke="#5c7fb8" stroke-width="0.8"/></svg>
<div class="t" style="left:291.7px;top:236px;font-size:9.8px;letter-spacing:0.35px;">Output</div>
<div class="a" id="otab2" style="left:328.5px;top:235.5px;width:66.5px;height:15.5px;background:#eee;border:1px solid #a6a6a6;border-bottom:none;border-left:none;border-radius:0 3px 0 0"></div>
<svg style="left:332px;top:238.4px" width="12" height="10" viewBox="0 0 12 10"><rect x="0.5" y="0.5" width="11" height="9" fill="#c3ccdc" stroke="#8a95ab" stroke-width="0.9"/><path d="M1 7L4 3.6 6.4 6 9 3 11 5.4" stroke="#d8453a" stroke-width="1.1" fill="none"/><path d="M1 5L4 6.6 6.6 4 11 7" stroke="#5c86c6" stroke-width="0.8" fill="none"/></svg>
<div class="t" style="left:347.7px;top:236px;font-size:9.8px;letter-spacing:0.25px;">Statistics</div>
<div class="a" id="edtext" style="left:221.3px;top:41.7px;width:548.5px;height:152.9px;overflow:hidden">
<div class="m" style="left:0;top:0.0px"><span class="k">Feature</span>: Manage Notes</div>
<div class="m" style="left:0;top:15.5px">  In order to make a notebook</div>
<div class="m" style="left:0;top:31.0px">  As a user</div>
<div class="m" style="left:0;top:46.5px">  I want to create and manage notes</div>
<div class="m" style="left:0;top:77.5px">  <span class="tg">@create</span></div>
<div class="m" style="left:0;top:93.0px">  <span class="k">Scenario</span>: Create New Note</div>
<div class="m" style="left:0;top:108.5px">    <span class="k">Given</span> I have no notes</div>
<div class="m" style="left:0;top:124.0px">    <span class="k">And</span> I am on the list of notes</div>
<div class="m" style="left:0;top:139.5px">    <span class="k">When</span> I follow "New note"</div>
</div>
<div class="a" id="cotext" style="left:273.4px;top:253px;width:497px;height:194px;overflow:hidden">
<div class="m" style="left:0;top:0.0px"><span class="lk">/usr/bin/ruby</span><span class="g1"> -e STDOUT.sync=true;STDERR.sync=true;load($0=ARGV.shift) /Users/topka/RubymineProjects</span></div>
<div class="m" style="left:0;top:15.5px">Tag: <span class="cy">@create</span></div>
<div class="m" style="left:0;top:46.5px"><span class="er">Webrat::NotFoundError: Could not find link with text or title or id "View"</span></div>
<div class="m" style="left:0;top:62.0px"><span class="er">(eval):2:in `click_link'</span></div>
<div class="m" style="left:0;top:77.5px"><span class="lk">/Users/topka/RubymineProjects/cuc_test/features/step_definitions/webrat_steps.rb:19</span><span class="er">:in</span></div>
<div class="m" style="left:0;top:93.0px"><span class="lk">/Users/topka/RubymineProjects/cuc_test/features/manage_notes.feature:32</span><span class="er">:in `When I follow "View"'</span></div>
<div class="m" style="left:0;top:124.0px"><span class="gy">Skipped step</span></div>
<div class="m" style="left:0;top:139.5px">4 scenarios (<span class="er">1 failed</span>, <span class="gn">3 passed</span>)</div>
<div class="m" style="left:0;top:155.0px">20 steps (<span class="er">1 failed</span>, <span class="sk">1 skipped</span>, <span class="gn">18 passed</span>)</div>
</div>
</div>
</body></html>
